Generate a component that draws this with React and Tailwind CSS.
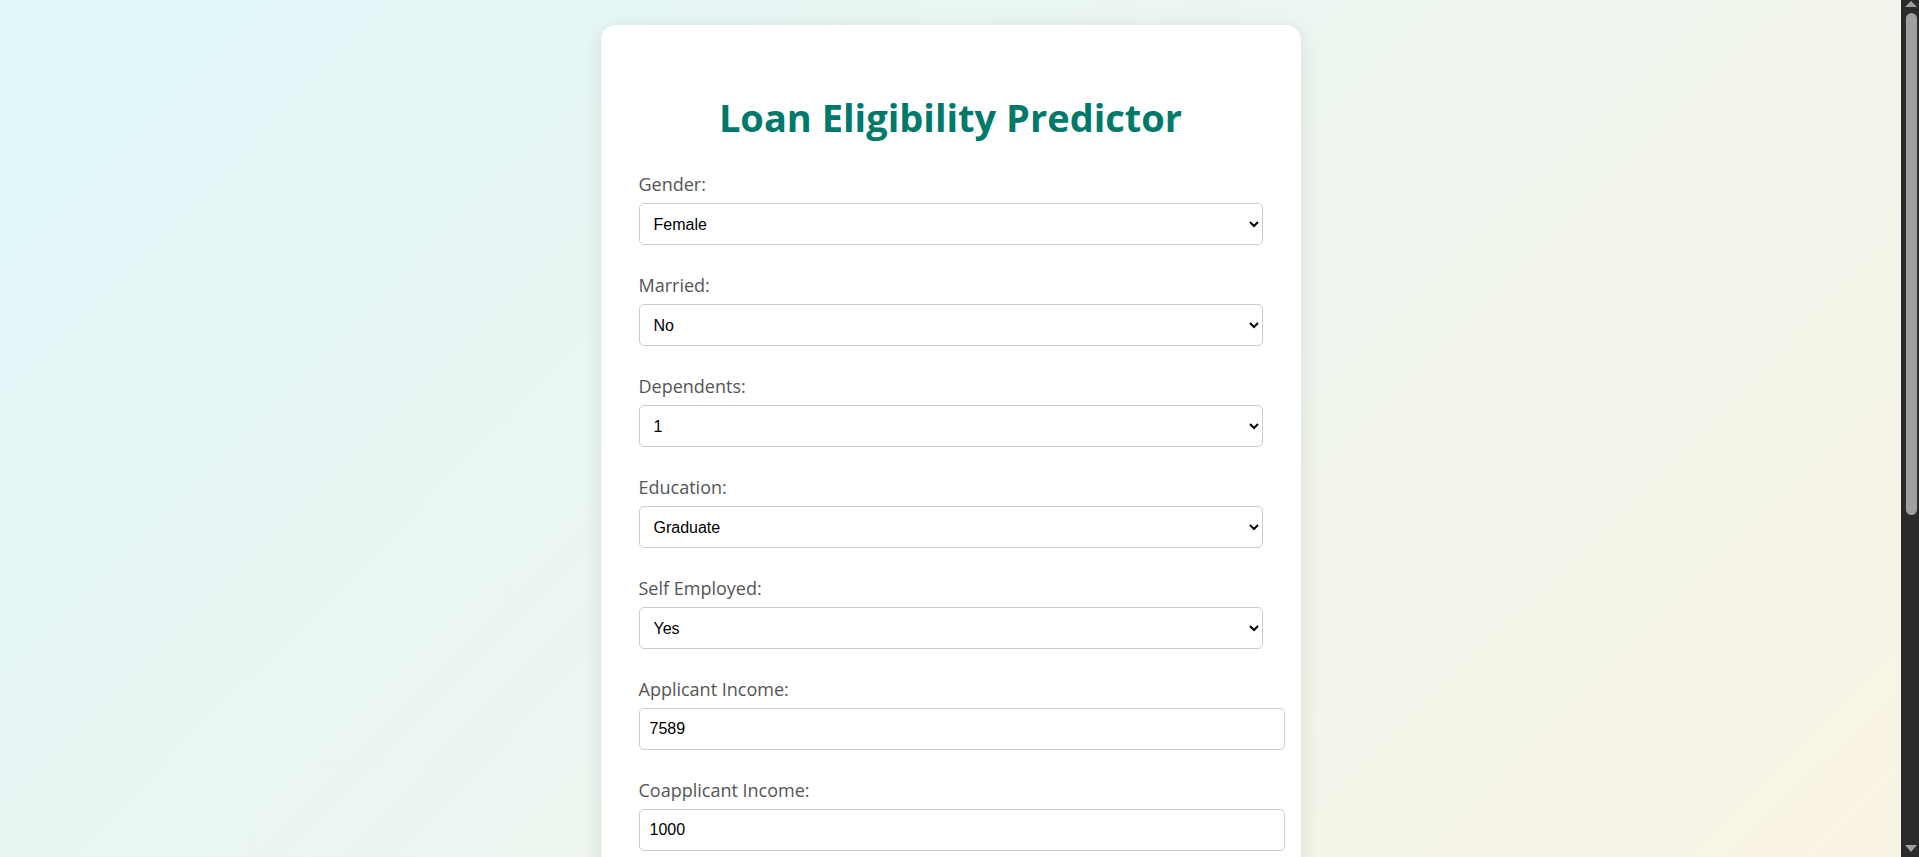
const selectFields = [
  { label: "Gender:", name: "gender", value: "Female", options: ["Male", "Female"] },
  { label: "Married:", name: "married", value: "No", options: ["Yes", "No"] },
  { label: "Dependents:", name: "dependents", value: "1", options: ["0", "1", "2", "3+"] },
  { label: "Education:", name: "education", value: "Graduate", options: ["Graduate", "Not Graduate"] },
  { label: "Self Employed:", name: "self_employed", value: "Yes", options: ["No", "Yes"] },
];

const numberFields = [
  { label: "Applicant Income:", name: "applicant_income", value: "7589" },
  { label: "Coapplicant Income:", name: "coapplicant_income", value: "1000" },
  { label: "Loan Amount:", name: "loan_amount", value: "120" },
  { label: "Loan Amount Term:", name: "loan_term", value: "360" },
];

const lastSelects = [
  { label: "Credit History:", name: "credit_history", value: "1", options: ["1", "0"] },
  { label: "Property Area:", name: "property_area", value: "Urban", options: ["Urban", "Semiurban", "Rural"] },
];

const labelCls =
  "block mb-[7px] text-[18px] leading-[24px] text-[#555] font-['Open_Sans',sans-serif]";

const SelectField = ({ field }) => (
  <div className="mb-[28px]">
    <label htmlFor={field.name} className={labelCls}>
      {field.label}
    </label>
    <select
      id={field.name}
      defaultValue={field.value}
      className="block w-full h-[42px] px-[10px] bg-white text-black text-[16px] border border-[#ccc] rounded-[5px] font-['Liberation_Sans',Arial,sans-serif]"
    >
      {field.options.map((o) => (
        <option key={o} value={o}>
          {o}
        </option>
      ))}
    </select>
  </div>
);

const NumberField = ({ field }) => (
  <div className="mb-[28px]">
    <label htmlFor={field.name} className={labelCls}>
      {field.label}
    </label>
    <input
      id={field.name}
      type="number"
      defaultValue={field.value}
      className="block box-content w-full h-[20px] px-[10px] py-[10px] leading-[20px] bg-white text-black text-[16px] border border-[#ccc] rounded-[5px] font-['Liberation_Sans',Arial,sans-serif]"
    />
  </div>
);

// dark window scrollbar, drawn since the headless page hides the real one
const Scrollbar = () => (
  <div className="w-[18px] shrink-0 h-full bg-[#2b2b2b] flex flex-col items-center">
    <svg width="12" height="6" viewBox="0 0 12 6" className="mt-[1px] ml-[1px]">
      <path d="M6 0 L12 6 L0 6 Z" fill="#9f9f9f" />
    </svg>
    <div className="mt-[6px] ml-[2px] w-[11px] h-[502px] rounded-full bg-[#9f9f9f]" />
    <div className="flex-1" />
    <svg width="12" height="7" viewBox="0 0 12 7" className="mb-[5px] ml-[1px]">
      <path d="M0 0 L12 0 L6 7 Z" fill="#9f9f9f" />
    </svg>
  </div>
);

export default function App() {
  return (
    <div className="flex h-screen overflow-hidden">
      <main className="flex-1 min-w-0 overflow-y-auto">
        <div className="min-h-full bg-[linear-gradient(135deg,#e0f7fa,#fff3e0)] pt-[25px] pb-[40px] px-4">
          <div className="mx-auto w-full max-w-[700px] bg-white rounded-[15px] px-[38px] pt-[38px] pb-[38px] shadow-[0_4px_20px_rgba(0,0,0,0.1)]">
            <h1 className="mt-[28px] mb-[29px] text-center text-[38px] leading-[52px] font-bold text-[#00796b] font-['Open_Sans',sans-serif]">
              Loan Eligibility Predictor
            </h1>
            <form onSubmit={(e) => e.preventDefault()}>
              {selectFields.map((f) => (
                <SelectField key={f.name} field={f} />
              ))}
              {numberFields.map((f) => (
                <NumberField key={f.name} field={f} />
              ))}
              {lastSelects.map((f) => (
                <SelectField key={f.name} field={f} />
              ))}
              <button
                type="submit"
                className="mt-[10px] w-full h-[48px] rounded-[5px] bg-[#00796b] text-white text-[18px] font-semibold font-['Open_Sans',sans-serif] hover:bg-[#00695c]"
              >
                Check Eligibility
              </button>
            </form>
          </div>
        </div>
      </main>
      <Scrollbar />
    </div>
  );
}
